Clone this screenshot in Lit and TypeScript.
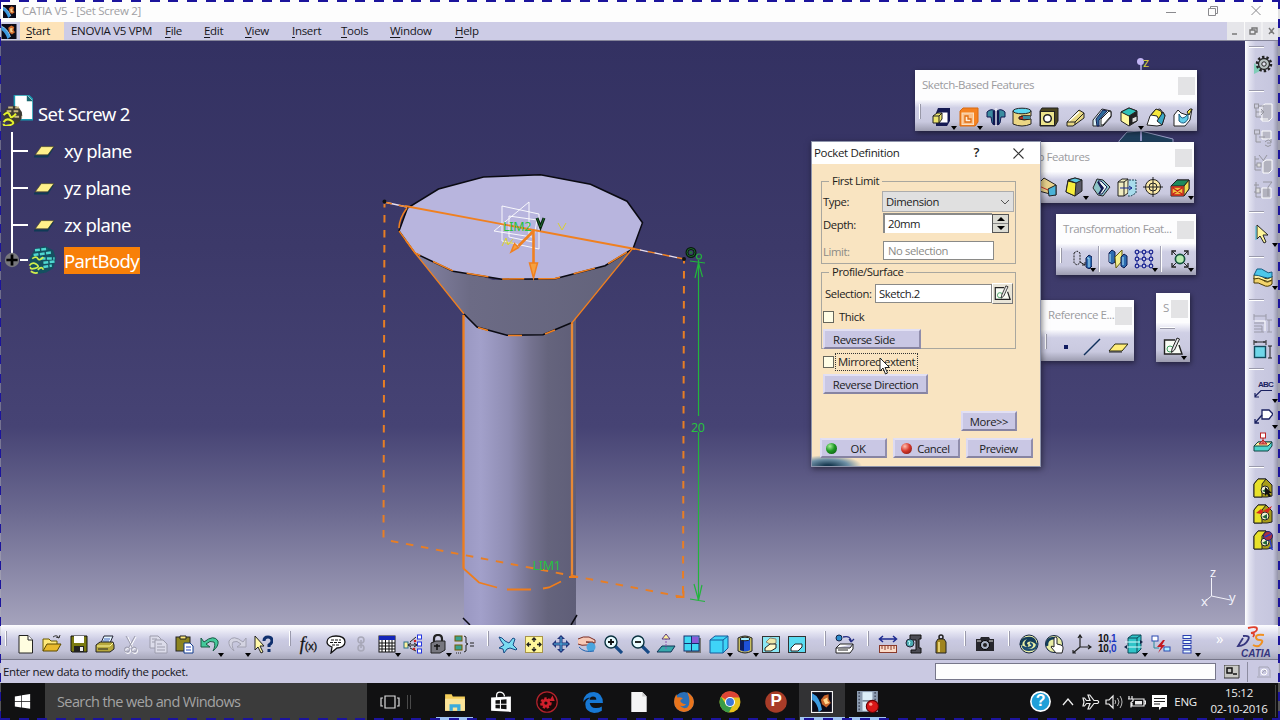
import { LitElement, css, html, svg, nothing, TemplateResult } from 'lit'
import { customElement, property } from 'lit/decorators.js'

// every icon is drawn on a 20 x 20 grid
const icons: Record<string, TemplateResult> = {
  logo: svg`<rect width="20" height="20" fill="#0a0a18"/><path d="M0 3 Q7 5 12 17 L8 20 Q5 11 0 8z" fill="#3d9be0"/><path d="M0 3 Q8 6 12 17" stroke="#bfe4ff" fill="none"/><path d="M9 5 L13 2 L17 4 L16 8 L18 11 L14 14 L10 11z" fill="#d0692a"/><path d="M11 6 l4 -1 -1 4 2 2 -4 0z" fill="#f5cf90"/>`,
  new: svg`<path d="M3 1.500h9l4.500 4.500v13h-13.500z" fill="#fffde0" stroke="#222"/><path d="M12 1.500v4.500h4.500" fill="#fff" stroke="#222"/>`,
  open: svg`<path d="M1 17V5h6l2 2h6v3" fill="#ffe97a" stroke="#6b5a00"/><path d="M1 17l4-7h14l-4 7z" fill="#e8b92c" stroke="#5a4800"/><path d="M11 3q4-3 6 1m0 0l1-3m-1 3l-3-1" fill="none" stroke="#333"/>`,
  save: svg`<path d="M2 2h16v16H3l-1-1z" fill="#7a7a10" stroke="#111"/><rect x="5" y="2" width="10" height="7" fill="#fff"/><rect x="5" y="12" width="10" height="6" fill="#222"/><rect x="11" y="13" width="3" height="4" fill="#eee"/>`,
  print: svg`<path d="M6 9l3-7h9l-3 7z" fill="#e5f6ff" stroke="#223"/><path d="M8 7h6M9 5h6" stroke="#46b"/><path d="M1 11l4-3h13l1 3v4l-4 3H1z" fill="#b7a83c" stroke="#222"/><path d="M2 12h13l3-3" stroke="#fff8a0" fill="none"/><path d="M3 15h10" stroke="#222"/>`,
  cut: svg`<g fill="none" stroke="#fff" transform="translate(1 1)"><path d="M6 2l5 11M14 2L8 13"/><circle cx="6" cy="16" r="2.500"/><circle cx="13" cy="16" r="2.500"/></g><g fill="none" stroke="#9c9cac"><path d="M5 2l6 11M14 2L8 13"/><circle cx="6" cy="15.500" r="2.500"/><circle cx="13" cy="15.500" r="2.500"/></g>`,
  copy: svg`<g fill="#dcdcea" stroke="#9c9cac"><path d="M2 2h8l3 3v9H2z"/><path d="M7 6h8l4 4v9H7z"/><path d="M9 10h5M9 13h8M9 16h8M4 5h5M4 8h3"/></g>`,
  paste: svg`<rect x="2" y="3" width="14" height="14" fill="#8c8420" stroke="#222"/><path d="M6 5V2h6v3z" fill="#ffe97a" stroke="#222"/><path d="M10 9h6l3 3v7h-9z" fill="#fff" stroke="#113a8c"/><path d="M12 13h5M12 16h5" stroke="#2344c0"/>`,
  undo: svg`<path d="M1 4v9h9l-4-3q4-4 8-2 2 3-1 9 6-5 5-10-4-7-14 1z" fill="#43c99a" stroke="#1a5a44"/>`,
  redo: svg`<path d="M19 4v9h-9l4-3q-4-4-8-2-2 3 1 9-6-5-5-10 4-7 14 1z" fill="#d4d4e2" stroke="#a2a2b2"/>`,
  whats: svg`<path d="M2 2v14l3-3 3 6 2-1-3-6h4z" fill="#fff9a8" stroke="#222"/><path d="M11 7q0-4 4-4t4 4q0 2-3 4v2" fill="none" stroke="#10306e" stroke-width="3"/><rect x="14.500" y="15" width="3" height="3" fill="#10306e"/>`,
  bubble: svg`<path d="M10 2c5 0 9 2 9 6s-4 6-8 6l-6 5 1-6c-3-1-5-3-5-5 0-4 4-6 9-6z" fill="#fff" stroke="#111" stroke-width="1.300"/><path d="M5 6h10M4 8.500h12M6 11h8" stroke="#111" stroke-dasharray="3 1"/>`,
  link: svg`<g fill="none" stroke="#a8a8b8" stroke-width="1.600"><circle cx="10" cy="6" r="3"/><circle cx="10" cy="14" r="3"/><path d="M10 6v8"/></g>`,
  table: svg`<rect x="2" y="2" width="16" height="16" fill="#fff" stroke="#111"/><rect x="2" y="2" width="16" height="4" fill="#1526b8"/><path d="M2 9h16M2 12h16M2 15h16M5 6v12M8.500 6v12M12 6v12M15 6v12" stroke="#111"/>`,
  relations: svg`<rect x="1" y="8" width="4" height="6" fill="#fff29a" stroke="#2a6f88"/><path d="M6 11h8M7 8l6-5M7 14l6 3M5 11l3-2m-3 2l3 2M14 11l-3-2m3 2l-3 2" stroke="#222" fill="none"/><g fill="#fff" stroke="#2233e0"><rect x="14.500" y="1" width="4" height="4"/><rect x="14.500" y="8" width="4" height="4"/><rect x="14.500" y="15" width="4" height="4"/></g><circle cx="11" cy="15" r="1.300" fill="#c22"/><circle cx="12" cy="7" r="1.300" fill="#c22"/>`,
  lock: svg`<path d="M6 10V5q0-4 4-4t4 4v5" fill="none" stroke="#222" stroke-width="2.200"/><path d="M3 9l5-2h9v9l-5 3H3z" fill="#77777f" stroke="#222"/><path d="M9 10v6M6 12h6" stroke="#111" stroke-width="1.500"/>`,
  rules: svg`<g fill="#38a090" stroke="#775c00"><rect x="1" y="2" width="7" height="5"/><rect x="1" y="11" width="7" height="5"/></g><path d="M2 19h6" stroke="#222" stroke-dasharray="1 1"/><path d="M10 2q3 0 2 4t2 4q-3 0-2 4t-2 4M16 9h4M16 12h4" fill="none" stroke="#222"/>`,
  fly: svg`<path d="M1 3l3 1 3 3 4 2 4-5 2 1-2 6 4 4-1 1-6-2-3 1-3 4-1-4-4-1 5-3-3-4z" fill="#7adcf2" stroke="#174a86"/>`,
  fit: svg`<rect x="1.500" y="2.500" width="17" height="16" fill="#fff79a" stroke="#a8954a"/><path d="M10 4v4M10 13v4M3 10.500h4M13 10.500h4M8 6l2-2 2 2M8 15l2 2 2-2M5 8.500l-2 2 2 2M15 8.500l2 2-2 2" stroke="#222" stroke-width="1.300" fill="none"/>`,
  pan: svg`<path d="M10 1l4 4h-2.500v3.500H15V6l4 4-4 4v-2.500h-3.500V15H14l-4 4-4-4h2.500v-3.500H5V14l-4-4 4-4v2.500h3.500V5H6z" fill="#23367c"/><path d="M10 3v14M3 10h14" stroke="#4fb5e0"/>`,
  rotate: svg`<path d="M1 5q5-3 11-2l6 3v3l-9-1h7l1 3H9q-4 1-8-1" fill="#f7c9b6" stroke="#7a2e26"/><circle cx="14" cy="13" r="4.500" fill="#4aa5de"/><path d="M2 13q5 6 15 4" fill="none" stroke="#1f63b0"/>`,
  zoomin: svg`<path d="M12 12l7 7" stroke="#174a86" stroke-width="3.200"/><circle cx="8" cy="8" r="6" fill="#e8fbff" stroke="#0b3340" stroke-width="1.400"/><path d="M8 5v6M5 8h6" stroke="#111" stroke-width="1.800"/>`,
  zoomout: svg`<path d="M12 12l7 7" stroke="#174a86" stroke-width="3.200"/><circle cx="8" cy="8" r="6" fill="#e8fbff" stroke="#0b3340" stroke-width="1.400"/><path d="M5 8h6" stroke="#111" stroke-width="1.800"/>`,
  normal: svg`<path d="M1 18l5-6h13l-4 6z" fill="#38a8ac" stroke="#135"/><path d="M10 15V4" stroke="#8a58b0" stroke-dasharray="2 1"/><path d="M10 0l4 5H6z" fill="#fff29a" stroke="#5a3a80"/>`,
  views: svg`<path d="M4 4h15v15H4z" fill="#777"/><rect x="2" y="2" width="15" height="15" fill="#40d8f4" stroke="#15306e"/><path d="M10 2.500h6.500V9H10z" fill="#8a5bd8"/><path d="M9.500 2v15M2 9.500h15" stroke="#15306e"/>`,
  cube: svg`<path d="M1 6l5-4h13v12l-5 5H1z" fill="#3fd4f7" stroke="#155a9c"/><path d="M1 6h13v13M14 6l5-4" fill="none" stroke="#155a9c"/>`,
  cylinder: svg`<path d="M3 4q7-4 14 0v13q-7 4-14 0z" fill="#c8be62" stroke="#222"/><path d="M5 6h10v10q-5 3-10 0z" fill="#1d50d8"/><path d="M5 6h4v11l-4-1z" fill="#0c1e60"/><ellipse cx="10" cy="5" rx="5" ry="1.800" fill="#a6f0ff" stroke="#222"/>`,
  hide: svg`<rect x="1.500" y="2.500" width="17" height="16" fill="#8ae7f4" stroke="#333"/><path d="M5 8l4-4 6 1v4l-4 2z" fill="#ece6a8" stroke="#887"/><path d="M4 14l5-4h6v4l-5 3H4z" fill="#fff8c8" stroke="#222"/>`,
  swap: svg`<rect x="1.500" y="2.500" width="17" height="16" fill="#5adcf2" stroke="#333"/><path d="M4 14l4-4h7v3l-4 4H4z" fill="#fff" stroke="#222"/>`,
  printer3d: svg`<circle cx="4" cy="4" r="3" fill="#2c8ccc" stroke="#124"/><path d="M8 3q8-2 8 5m0 0l-2-3m2 3l3-3" fill="none" stroke="#222a80" stroke-width="1.300"/><path d="M1 14l4-4h13l-3 4zM1 14v5h14l3-4v-5M3 16h10" fill="#fff" stroke="#222"/>`,
  measure: svg`<path d="M2 5h16M5 2L1.500 5 5 8M15 2l3.500 3L15 8" fill="none" stroke="#1d2a90" stroke-width="1.500"/><rect x="1.500" y="11.500" width="17" height="7" fill="#fbdcc8" stroke="#8a3a2a"/><path d="M4 12v3M7 12v4M10 12v3M13 12v4M16 12v3" stroke="#8a3a2a"/>`,
  clamp: svg`<path d="M6 1h11v4h-2v9h2v5H7v-3h5V6H6z" fill="#4c4c54" stroke="#111"/><circle cx="6" cy="9" r="4" fill="#49a8b0" stroke="#223"/><path d="M4 7l2 1-1 3" stroke="#cff" fill="none"/>`,
  weight: svg`<circle cx="10" cy="3" r="2" fill="none" stroke="#222" stroke-width="1.500"/><path d="M7 5h6l2 3v11H5V8z" fill="#a08420" stroke="#222"/><path d="M8 8v10" stroke="#e5d070" stroke-width="2"/>`,
  camera: svg`<path d="M1 5h4l1-2h8l1 2h4v12H1z" fill="#26262c"/><circle cx="10" cy="11" r="4.500" fill="#a9b3c4" stroke="#000"/><circle cx="10" cy="11" r="2" fill="#222"/><path d="M2 7h4M14 7h4" stroke="#ddd"/>`,
  update: svg`<circle cx="10" cy="10" r="9" fill="#e9eea6" stroke="#10203c"/><path d="M2 11q0-7 8-7 5 0 6 4-4-3-8-1-3 3 1 5" fill="none" stroke="#123c58" stroke-width="2.600"/><path d="M18 9q0 7-8 7-5 0-6-3 4 2 8 0 3-2-1-4" fill="none" stroke="#1c4c70" stroke-width="2"/>`,
  manual: svg`<circle cx="9" cy="10" r="8.500" fill="#e9eea6" stroke="#10203c"/><path d="M2 12q-1-8 8-8" fill="none" stroke="#123c58" stroke-width="2.600"/><path d="M9 4q2-2 3 0v6l4 1q3 1 2 4l-1 4h-6l-5-6q0-2 3 0z" fill="#fff" stroke="#222"/>`,
  axis: svg`<path d="M8 13V1M8 13h11M8 13l-7 6M6 4l2-3 2 3M16 11l3 2-3 2M1 16v3h3" stroke="#222" fill="none" stroke-width="1.200"/>`,
  swap3: svg`<path d="M4 4l4-3h9v14l-4 4H4z" fill="#2fc4c8" stroke="#0c4a58"/><path d="M4 4h9v15M13 4l4-3" fill="none" stroke="#0c4a58"/><path d="M1 8h17M1 13h17" stroke="#d9fbff"/><path d="M0 13l3-2v4zM19 8l-3-2v4z" fill="#124"/>`,
  flash: svg`<rect x="1" y="2" width="6" height="5" fill="#fff" stroke="#2a48b0"/><rect x="13" y="13" width="6" height="4" fill="#aef" stroke="#2a48b0"/><path d="M3 7v7h5" fill="none" stroke="#2a8a9a"/><path d="M12 6l-6 7h4l-3 6 7-8h-3l3-5z" fill="#c41820"/>`,
  list: svg`<g fill="#e9fbff" stroke="#2a3fb0"><rect x="6" y="1.500" width="8" height="3"/><rect x="6" y="6.500" width="8" height="3"/><rect x="6" y="11.500" width="8" height="3"/><rect x="6" y="16" width="8" height="3"/></g>`,

  gear: svg`<path d="M1 8v11l8-4z" fill="#7fcdb8"/><circle cx="11" cy="9" r="7" fill="none" stroke="#222" stroke-width="2.500" stroke-dasharray="2.400 2"/><circle cx="11" cy="9" r="5.500" fill="#b8c2c2" stroke="#222" stroke-width="1.300"/><circle cx="11" cy="9" r="2.200" fill="#e4e4f0" stroke="#222"/>`,
  gray1: svg`<path d="M9 4l3-2h7v14l-3 3H9z" fill="#b9b9c6" stroke="#fff"/><g fill="#cdcddc" stroke="#96969f"><rect x="1.500" y="2" width="4" height="4"/><path d="M3 6v9h5M6 4h5M3 10h8l-3-3m3 3l-3 3"/></g><path d="M7 5v8M7 17h8" stroke="#fff"/>`,
  gray2: svg`<path d="M9 3h9v8H9z" fill="#b9b9c6" stroke="#fff"/><g fill="#cdcddc" stroke="#96969f"><rect x="1.500" y="2" width="5" height="4"/><path d="M3 6v8h5M6 9h6"/><path d="M12 14q4-4 6 0m0-3v4h-4M18 17q-3 3-6 0" fill="none"/></g>`,
  gray3: svg`<path d="M10 8l3-2h6v10l-3 3h-6z" fill="#b2b2be" stroke="#fff"/><g fill="none" stroke="#96969f"><path d="M2 2v14h6M2 5h4M6 1l4 5M14 1l-4 6M2 11h6"/><rect x="4" y="9" width="4" height="4" fill="#ddd"/></g>`,
  gray4: svg`<path d="M9 8h9v10H9z" fill="#b2b2be" stroke="#fff"/><g fill="none" stroke="#96969f"><path d="M3 2v15h5M1 5h5M10 2h9l-4 5v9M1 12h7"/><rect x="3" y="8" width="4" height="5" fill="#ddd"/></g>`,
  select: svg`<path d="M4 1v14l3-3 4 7 2-1-3-7h5z" fill="#fff79a" stroke="#222"/><path d="M3 2v14" stroke="#3ab8c8"/>`,
  surface: svg`<path d="M1 11q5-2 9 2t9 0v4q-4 4-9 1t-9-2z" fill="#f3d46c" stroke="#4a3a00"/><path d="M1 8q5-2 9 2t9-1v4q-4 3-9 0t-9-1z" fill="#fff2a8" stroke="#4a3a00"/><path d="M4 2q5-1 8 2t7 1v5q-4 2-9 0t-9-2z" fill="#4cc7ea" stroke="#175a80"/>`,
  dimsgray: svg`<g fill="none" stroke="#9a9aa8"><path d="M1 3h12M1 1v6M13 1v6M16 7v12M14 7h5M14 19h5M1 10h10M1 13h8M9 13v6M1 16h8M1 19h10"/></g><path d="M2 8h10v10" stroke="#fff" fill="none"/>`,
  dims: svg`<rect x="1.500" y="7.500" width="11" height="11" fill="#6fd6e8" stroke="#124a5c" stroke-width="1.400"/><path d="M1 3h12M1 1v5M13 1v5M17 7v12M15 7h4M15 19h4M3 2v2M11 2v2" fill="none" stroke="#222"/>`,
  leader: svg`<path d="M19 10.500H8l-6 6M2 13v4h4" fill="none" stroke="#1a2160" stroke-width="1.200"/>`,
  tag: svg`<path d="M9 4h7l4 4-4 5H9z" fill="#fff" stroke="#1a2160" stroke-width="1.300"/><path d="M9 9l-7 8M2 13v4h4" fill="none" stroke="#1a2160" stroke-width="1.300"/>`,
  stamp: svg`<path d="M1 14l4-4h14v4l-4 5H1z" fill="#4cd4cc" stroke="#144"/><path d="M1 14l4-4h14l-4 4z" fill="#fff2a0" stroke="#144"/><rect x="7.500" y="1" width="5" height="5" fill="#fff" stroke="#b22"/><path d="M10 6v6M6 12h8l-4-4z" stroke="#b22" fill="#d88"/>`,
  nut: svg`<path d="M1 6l4-5h8l6 6v11l-5 1H1z" fill="#a89c18" stroke="#222"/><path d="M1 6l4-5h8l-4 5v13H1z" fill="#e8e12a" stroke="#222"/><circle cx="12" cy="12" r="4" fill="#f2f0d0" stroke="#222"/><path d="M9 13l5-3v5z" fill="#20663a"/>`,

  pad: svg`<path d="M6 1h12v13l-3 5H4V6z" fill="#151a52"/><path d="M6 5h10v11H6z" fill="#fff" stroke="#151a52"/><path d="M1 9l4-3h5v6l-3 4H1z" fill="#ece46c" stroke="#222"/><path d="M1 9h6v7M7 9l3-3" fill="none" stroke="#222"/>`,
  pocket: svg`<path d="M1 4l3-3h15v14l-3 4H1z" fill="#f58220" stroke="#d86a10"/><rect x="3" y="6" width="11.500" height="11.500" fill="#f8c08c" stroke="#fbe0c0"/><path d="M6 9h3v3h3v3H6z" fill="#fff0dc" stroke="#e06c10" stroke-width="1.300"/>`,
  shaft: svg`<path d="M1 5q4-4 8-1v14l-3-2-1-6H1z" fill="#3a8ca0" stroke="#101850"/><path d="M19 5q-4-4-8-1v14l3-2 1-6h4z" fill="#3a8ca0" stroke="#101850"/><path d="M8 4v14M12 4v14" stroke="#101850" stroke-width="2.500"/><path d="M10 1v18" stroke="#fff"/>`,
  groove: svg`<path d="M1 4v13q9 4 18 0v-5H9V9h10V4z" fill="#ecd684" stroke="#222"/><ellipse cx="10" cy="4" rx="9" ry="2.800" fill="#5cd8f0" stroke="#222"/><path d="M7 10q5-2 11-1v3q-6 2-11 0z" fill="#b02a20" stroke="#222"/><path d="M11 9h7v3h-7z" fill="#3a8ca0"/>`,
  hole: svg`<path d="M1 4l2-3h16v13l-3 5H1z" fill="#4a4420" stroke="#222"/><rect x="1.500" y="4.500" width="14" height="14" fill="#ece48c" stroke="#222"/><circle cx="8.500" cy="11.500" r="3.800" fill="#fff" stroke="#222" stroke-width="1.500"/>`,
  rib: svg`<path d="M1 15L13 3l5 3v5L7 19H1z" fill="#e8d884" stroke="#222"/><path d="M1 15h8l9-9M9 15v3" stroke="#222" fill="none"/><path d="M3 14l10-9" stroke="#fff" stroke-width="1.500"/>`,
  slot: svg`<path d="M1 13L10 2l9 2v6l-8 9H1z" fill="#d8f0f4" stroke="#222"/><path d="M4 12l7-9 4 1-8 9v6H5z" fill="#2e6c9c" stroke="#151a52"/><path d="M9 12l8-8 2 1v4l-8 9H9z" fill="#fff" stroke="#222"/>`,
  solid: svg`<path d="M2 5l8-4 8 3v10l-8 5-8-5z" fill="#fff9a0" stroke="#222"/><path d="M2 5l8-4 8 3-8 5z" fill="#2fc0b8" stroke="#222"/><path d="M10 9l8-5v10l-8 5z" fill="#222"/><path d="M13 11l5-2v5l-5 2z" fill="#ddd" stroke="#222"/>`,
  multi: svg`<path d="M1 18l3-9 5-6 5-1 5 6-3 10-5 1z" fill="#fff" stroke="#222"/><path d="M5 8l5-6 5 2 2 6-4 3-2-4z" fill="#f7e83c" stroke="#222"/><path d="M11 14l6-9 2 4-3 9z" fill="#3aa6c4" stroke="#222"/>`,
  removed: svg`<path d="M1 8l4-5 3 3 6 2 5-6-2 11-5 6H1z" fill="#fff" stroke="#222"/><path d="M6 7q3 8 9 0v5q-4 7-9 2z" fill="#62cce8" stroke="#175a80"/><path d="M14 5l3-3h2l-3 6z" fill="#f7e83c" stroke="#222"/>`,
  fillet: svg`<path d="M1 6l5-5 12 7v10l-6-1L1 14z" fill="#e9d28c" stroke="#222"/><path d="M10 12l8-4v10l-7 1z" fill="#4ab2d8" stroke="#222"/><path d="M1 9l9 4" stroke="#c33"/>`,
  draft: svg`<path d="M4 3l7-2 7 2v11l-7 5-9-4z" fill="#5a5a68" stroke="#222"/><path d="M4 4l8 2-1 13-9-4z" fill="#f7ee3c" stroke="#222"/><path d="M4 3l7-2 7 2-6 3z" fill="#5cc8e0" stroke="#222"/>`,
  shell: svg`<path d="M2 11L6 2l6 1 7 7-7 9-5-1z" fill="#8cc4c8" stroke="#222"/><path d="M7 4h3l6 6-5 7H8l4-6z" fill="#e8f4f0" stroke="#151a52"/><path d="M6 5h2l5 6-4 6H7l3-5z" fill="#151a52"/>`,
  thickness: svg`<path d="M1 5l4-3h6v14l-4 3H1z" fill="#f0ecc0" stroke="#222"/><path d="M1 5h6v14M7 5l4-3" fill="none" stroke="#222"/><path d="M12 3h7v13l-5 3h-3" fill="#a8dcec" stroke="#245" stroke-dasharray="2 1"/><path d="M3 11h12m0 0l-3-2m3 2l-3 2" stroke="#1a2a90" fill="none"/>`,
  thread: svg`<circle cx="10" cy="10" r="7.500" fill="#fbe9a8" stroke="#222"/><circle cx="10" cy="10" r="4" fill="none" stroke="#222"/><path d="M10 0v20M0 10h20" stroke="#222"/>`,
  remove: svg`<path d="M1 9l6-6h12v9l-5 7H1z" fill="#f0c040" stroke="#222"/><path d="M1 9l6-6h12l-5 6z" fill="#1e8a5c" stroke="#222"/><path d="M14 9l5-6v9l-5 7z" fill="#f2dc50" stroke="#222"/><path d="M3 11l9 6M12 11l-9 6M2 10h11v8H2z" stroke="#c8201c" stroke-width="1.300" fill="none"/>`,
  translate: svg`<path d="M2 4l3-2 3 2v10l-3 2-3-2z" fill="none" stroke="#222" stroke-dasharray="2 1"/><path d="M8 13l5 3m0 0v-3m0 3h-3" stroke="#222" fill="none"/><path d="M14 9l3-3 3 2v9l-3 3-3-2z" fill="#2d6cb0" stroke="#0d1a50"/><path d="M15 9h2v9" stroke="#b8ecff" fill="none"/>`,
  mirror: svg`<path d="M1 4l3-3 3 2v10l-3 2-3-2z" fill="#2d6cb0" stroke="#0d1a50"/><path d="M2 5v8" stroke="#b8ecff"/><path d="M7 8l7-7v11l-6 7z" fill="#f4f08c" stroke="#665c10"/><path d="M13 8l3-3 3 2v9l-3 3-3-2z" fill="#2d6cb0" stroke="#0d1a50"/><path d="M15 8v8" stroke="#b8ecff"/>`,
  pattern: svg`<path d="M3 3h14M3 10h14M3 17h14M3 3v14M10 3v14M17 3v14" stroke="#2430a0"/><g fill="#c8c8e4" stroke="#1c2690" stroke-width="1.200"><circle cx="3" cy="3" r="1.800"/><circle cx="10" cy="3" r="1.800"/><circle cx="17" cy="3" r="1.800"/><circle cx="3" cy="10" r="1.800"/><circle cx="10" cy="10" r="1.800"/><circle cx="17" cy="10" r="1.800"/><circle cx="3" cy="17" r="1.800"/><circle cx="10" cy="17" r="1.800"/><circle cx="17" cy="17" r="1.800"/></g>`,
  scale: svg`<path d="M2 2l16 16M18 2L2 18" stroke="#222"/><path d="M2 6V2h4M14 2h4v4M18 14v4h-4M6 18H2v-4" fill="none" stroke="#222" stroke-width="1.300"/><circle cx="10" cy="10" r="4.600" fill="#b8ecb0" stroke="#14523c" stroke-width="1.700"/>`,
  point: svg`<rect x="8" y="8" width="4" height="4" fill="#101c60"/>`,
  line: svg`<path d="M2 18L18 2" stroke="#10305c" stroke-width="1.400"/>`,
  plane: svg`<path d="M1 14l6-7h13l-6 7z" fill="#ffed78" stroke="#2a2a10"/><path d="M1 15h13" stroke="#222"/>`,
  sketch: svg`<path d="M1 3h15l3 14H1z" fill="#f8fbf4"/><path d="M12 3H1.500v14H19l-3-9" fill="none" stroke="#222" stroke-width="1.400"/><circle cx="7" cy="12" r="3" fill="none" stroke="#3c9c60"/><path d="M9 12l5-11 2.500 1-5 11-3 2.500z" fill="#e8e8e8" stroke="#222"/>`,

  treeplane: svg`<path d="M1 15h12l5-8" fill="none" stroke="#0f3a56" stroke-width="2"/><path d="M2 13.500L7.500 6H19l-5.500 7.500z" fill="#fff08a" stroke="#3a3a20" stroke-width=".6"/>`,
  body: svg`<path d="M5 2l7-2 6 3 2 6-2 7-5 3-6 1-5-4-1-7z" fill="#145060"/><path d="M5 3l9-1M4 6.500l13-2M9 9h10M11 12l8-1M11 15l6-1" stroke="#4fd8d0" stroke-width="1.800" stroke-dasharray="3.500 1"/><path d="M3 9q3-2 4 0t4-1M1 14q2-3 5-1t-1 3-3-1M7 17q3-3 4 0M2 18q3 2 5 1" fill="none" stroke="#d0f04c" stroke-width="1.200"/>`,
  root: svg`<path d="M8 0h9l3 3v13H8z" fill="#fff" stroke="#1899b0"/><path d="M16 0l4 4h-4z" fill="#18646e"/><circle cx="7" cy="13" r="6" fill="#3c3a34"/><path d="M4 8h7M3 10.500h9M8 14h5" stroke="#c8b884" stroke-dasharray="3 1.500" stroke-width="1.300"/><path d="M1 13q3-3 4 0t4-1M1 17.500q2-3 5-1t-1 3-4-1" fill="none" stroke="#e4f22c" stroke-width="1.300"/>`,
  plus: svg`<circle cx="10" cy="10" r="9" fill="#77777c"/><path d="M10 3v14M3 10h14" stroke="#000" stroke-width="3.400"/>`,

  windows: svg`<path d="M1 4l7.500-1.200v6.700H1zM9.300 2.700L19 1.300v8.200H9.300zM1 10.300h7.500V17L1 15.900zM9.300 10.300H19v8.200l-9.700-1.400z" fill="#fff"/>`,
  taskview: svg`<path d="M5 4h10v12H5zM3 6H1v8h2M17 6h2v8h-2" fill="none" stroke="#ddd" stroke-width="1.200"/>`,
  explorer: svg`<path d="M1 3h6l1 2h11v13H1z" fill="#f5cf5a"/><path d="M1 7h18v11H1z" fill="#fbe59a"/><path d="M5 18v-6h10v6h-3v-3H8v3z" fill="#3cabdc"/>`,
  store: svg`<path d="M6 7V4q0-3 3-3t4 3v1" fill="none" stroke="#fff" stroke-width="1.200"/><path d="M1 6l18-1v14l-18-1z" fill="#fff"/><path d="M5 8.500l4-.4v3.600H5zM10 8l5-.5v4.200h-5zM5 12.500h4V16l-4-.4zM10 12.500h5v4l-5-.4z" fill="#111"/>`,
  redgear: svg`<circle cx="10" cy="10" r="9.300" fill="#1a0808" stroke="#b3232c" stroke-width="1.100"/><circle cx="9" cy="11" r="4" fill="#d0202c" stroke="#d0202c" stroke-width="2.500" stroke-dasharray="2 1.400"/><circle cx="9" cy="11" r="1.500" fill="#1a0808"/><path d="M12 9l3-5 2 5z" fill="#d0202c"/>`,
  edge: svg`<path d="M1 10Q2 1 11 1q8 1 8 10H7q1 5 6 4.500 3 0 5-1.500v4q-3 2-7 2-8-1-8-8 0-4 5-6-4 0-7 4zM7 8h6q0-3-3-3T7 8z" fill="#1778d4" fill-rule="evenodd"/>`,
  file: svg`<path d="M3 1h10l4 4v14H3z" fill="#f5f5f5"/><path d="M13 1v4h4" fill="#ccc"/>`,
  firefox: svg`<circle cx="10" cy="10" r="9" fill="#2a6fb8"/><path d="M13 1q6 4 6 9a9 9 0 0 1-18 0q0-4 2-7l1 3q3-1 5 1-3 1-2 3 2 2 5 2-3 3-6 1 3 4 7 2 4-4 0-14z" fill="#e8741c"/>`,
  chrome: svg`<circle cx="10" cy="10" r="9.500" fill="#e8c21c"/><path d="M10 10L1.800 5.200A9.500 9.500 0 0 1 18.800 6H10z" fill="#dd4535"/><path d="M1.800 5.200A9.500 9.500 0 0 0 9 19.500l4-7.500-6 1z" fill="#3a9c48"/><circle cx="10" cy="10" r="4.600" fill="#fff"/><circle cx="10" cy="10" r="3.600" fill="#3c78d8"/>`,
  disc: svg`<circle cx="10" cy="10" r="9.800" fill="#a83c28"/>`,
  catia: svg`<rect x=".5" y=".5" width="19" height="19" fill="#0a0a18" stroke="#f2f2f2"/><path d="M1 2q7 3 9 15l-3 2Q6 11 1 8z" fill="#3d9be0"/><path d="M9 8l3-4 4-1v4l2 4-4 4-4-3z" fill="#c8642a"/><path d="M11 8l4-2v3l2 2-4 1z" fill="#ffd890"/>`,
  recorder: svg`<rect x="0" y="0" width="19" height="19" fill="#8c9cb0"/><path d="M5 1h9v17H5z" fill="#dceef8"/><path d="M2 1v17M16.500 1v17" stroke="#4b5468" stroke-dasharray="1.500 1.500" stroke-width="1.500"/><path d="M5 9h9" stroke="#456"/><circle cx="14" cy="14" r="5.500" fill="#d81818" stroke="#600"/><circle cx="12.500" cy="12" r="1.500" fill="#ff9a8a"/>`,
  help: svg`<circle cx="10" cy="10" r="9.200" fill="#1f9fd8" stroke="#fff" stroke-width="1.500"/>`,
  chevron: svg`<path d="M5 13l5-6 5 6" fill="none" stroke="#eee" stroke-width="1.300"/>`,
  airplane: svg`<path d="M3 10L2 6h1.500l2 2.500H9L7 3h1.800L13 8.500h3.500q2.500 1.500 0 3H13L8.800 17H7l2-5.500H5.500l-2 2.500H2z" fill="none" stroke="#eee" stroke-width="1.200"/>`,
  speaker: svg`<path d="M3 8h3l4-4v12l-4-4H3z" fill="none" stroke="#eee" stroke-width="1.200"/><path d="M12 8q1.500 2 0 4M14.500 6q3 4 0 8M17 4q4 6 0 12" fill="none" stroke="#bbb"/>`,
  battery: svg`<path d="M7 7h11v7H6v-3M18 9h1.500v3H18M3 4v3M6 4v3M2 7h5v2l-2 1.500v5" fill="none" stroke="#eee" stroke-width="1.200"/><rect x="9" y="9" width="7" height="3.500" fill="#eee"/>`,
  note: svg`<path d="M3 3h15v12h-5l-3 3v-3H3z" fill="#fff"/><path d="M5 6.500h11M5 9.500h11M5 12h6" stroke="#222"/>`,
}

const fileTools = [['new'], ['open'], ['save'], ['print'], ['cut'], ['copy'], ['paste'], ['undo', 'v'], ['redo', 'v'], ['whats']]
const knowledgeTools = [['fx'], ['bubble'], ['link'], ['table', 'v'], ['relations'], ['lock', 'v'], ['rules']]
const viewTools = [['fly'], ['fit'], ['pan'], ['rotate'], ['zoomin'], ['zoomout'], ['normal'], ['views'], ['cube', 'v'], ['cylinder', 'v'], ['hide'], ['swap']]
const endTools = [['update'], ['manual'], ['axis'], ['digits'], ['swap3', 'v'], ['flash'], ['list', 'v']]

const bottomGroups = [fileTools, knowledgeTools, viewTools, [['printer3d']], [['measure'], ['clamp'], ['weight']], [['camera']], endTools]

const sideGroups = [
  { lead: 4, tools: [['gear']] },
  { lead: 7, tools: [['gray1'], ['gray2'], ['gray3'], ['gray4']] },
  { lead: 8, tools: [['select', 'v']] },
  { lead: 6, tools: [['surface', 'v']] },
  { lead: 9, tools: [['dimsgray'], ['dims']] },
  { lead: 7, tools: [['abc', 'v'], ['tag', 'v'], ['stamp']] },
  { lead: 7, tools: [['nut'], ['nutred'], ['nutblue']] },
]

@customElement('ui-icon')
export class UiIcon extends LitElement {
  @property() name = ''

  render() {
    // a few tools carry letters, those stay text
    if (this.name === 'fx') return html`<span class="fx">f<small>(x)</small></span>`
    if (this.name === 'digits') return html`<span class="digits">10<b>,1</b><br>10<b>,0</b></span>`
    if (this.name === 'abc') return html`<span class="abc">ABC</span><svg viewBox="0 0 20 20">${icons.leader}</svg>`
    if (this.name === 'ps') return html`<svg viewBox="0 0 20 20">${icons.disc}</svg><span class="over p">P</span>`
    if (this.name === 'help') return html`<svg viewBox="0 0 20 20">${icons.help}</svg><span class="over q">?</span>`
    if (this.name === 'nutred') return html`<svg viewBox="0 0 20 20">${icons.nut}<path d="M3 9l5-4 2 2 9-5-4 7-4-2-3 3z" fill="#d8281c"/></svg>`
    if (this.name === 'nutblue') return html`<svg viewBox="0 0 20 20">${icons.nut}<circle cx="15" cy="6" r="4.500" fill="#a83040" stroke="#1a2270"/><path d="M12 7l6-3M17 10l2 9-3-2" stroke="#2a3cc0" stroke-width="1.500" fill="none"/></svg>`
    if (this.name === 'nut') return html`<svg viewBox="0 0 20 20">${icons.nut}<path d="M12 9v9l2-2 2 3 2-1-2-3h3z" fill="#111"/></svg>`
    return html`<svg viewBox="0 0 20 20">${icons[this.name] ?? nothing}</svg>`
  }

  static styles = css`
    :host {
      display: block;
      position: relative;
      width: 20px;
      height: 20px;
    }
    svg {
      display: block;
      width: 100%;
      height: 100%;
    }
    .fx {
      font: italic 18px/20px "Liberation Serif", serif;
      color: #111;
      letter-spacing: 0;
      -webkit-text-stroke: 0.3px #111;
    }
    small {
      font: 11px "Liberation Sans", sans-serif;
      letter-spacing: -0.3px;
    }
    .digits {
      display: block;
      font: bold 10px/10px "Liberation Sans", sans-serif;
      letter-spacing: -0.3px;
      color: #111;
      white-space: nowrap;
    }
    .digits b {
      color: #1a35c0;
    }
    .abc {
      position: absolute;
      left: 5px;
      top: 0;
      font: bold 8px/9px "Liberation Sans", sans-serif;
      letter-spacing: -0.8px;
      color: #1a2160;
    }
    .over {
      position: absolute;
      inset: 0;
      text-align: center;
      color: #fff;
      font: bold 16px/20px "Liberation Sans", sans-serif;
      letter-spacing: 0;
    }
    .p {
      font-size: 17px;
    }
  `
}

const tool = ([name, caret]: string[]) => html`
  <div class="tool"><ui-icon name=${name}></ui-icon>${caret ? html`<i class="caret"></i>` : nothing}</div>`

const toolStyles = css`
  .tool {
    position: relative;
    flex: none;
    display: flex;
    align-items: center;
    justify-content: center;
    width: var(--tool-width, 26px);
    height: var(--tool-height, 26px);
  }
  .caret {
    position: absolute;
    right: -1px;
    bottom: 0;
    border: 3.500px solid transparent;
    border-top: 4px solid #000;
    border-bottom: 0;
  }
`

@customElement('float-bar')
export class FloatBar extends LitElement {
  @property() label = ''
  @property({ attribute: false }) groups: string[][][] = []

  render() {
    return html`
      <div class="head"><span>${this.label}</span><i class="close"></i></div>
      <div class="body">
        <i class="grip"></i>
        ${this.groups.map(g => html`<div class="group">${g.map(tool)}</div>`)}
      </div>
    `
  }

  static styles = [toolStyles, css`
    :host {
      display: flex;
      flex-direction: column;
      height: 61px;
      background: #fdfdfe;
      box-shadow: 1px 2px 5px rgba(0, 0, 0, 0.45);
      font: 11.500px "Open Sans", "Noto Sans", sans-serif;
      color: #9b9b9e;
    }
    .head {
      display: flex;
      justify-content: space-between;
      height: 30px;
      padding: 0 2px 0 7px;
      line-height: 29px;
      white-space: nowrap;
      box-sizing: border-box;
      letter-spacing: -0.45px;
    }
    .close {
      width: 17px;
      height: 18px;
      margin-top: 7px;
      background: #e3e3e5;
    }
    .body {
      flex: 1;
      display: flex;
      align-items: center;
      padding-left: 4px;
      background: linear-gradient(#fafafd, #cfcfe5 25%, #c9c9df 70%, #9d9db0);
    }
    .grip {
      width: 1px;
      height: 15px;
      margin: 0 var(--grip-gap, 7px) 8px 0;
      border-left: 1px solid #fff;
      background: #9898a8;
    }
    .group {
      display: flex;
      margin-top: var(--drop, 2px);
    }
    .group + .group {
      margin-left: 4px;
      padding-left: 5px;
      border-left: 1px solid #fff;
      box-shadow: -1px 0 #a2a2b4;
    }
    :host(.narrow) {
      height: 69px;
    }
    :host(.narrow) .body {
      flex-direction: column;
      align-items: flex-start;
    }
    :host(.narrow) .grip {
      width: 15px;
      height: 1px;
      margin: 4px 0 5px 0;
      border-left: 0;
      border-top: 1px solid #fff;
    }
    :host(.narrow) .group {
      margin: 0;
    }
  `]
}

@customElement('model-view')
export class ModelView extends LitElement {
  render() {
    return html`
      <svg viewBox="0 41 1245 584" width="1245" height="584">
        <defs>
          <linearGradient id="shank">
            <stop offset="0" stop-color="#9a98c2"/><stop offset=".15" stop-color="#a2a0ca"/>
            <stop offset=".4" stop-color="#8e8cb2"/><stop offset=".6" stop-color="#74728f"/>
            <stop offset=".75" stop-color="#65647d"/><stop offset="1" stop-color="#5f5e78"/>
          </linearGradient>
          <linearGradient id="cone">
            <stop offset="0" stop-color="#8583a4"/><stop offset=".25" stop-color="#6c6b85"/><stop offset="1" stop-color="#62627a"/>
          </linearGradient>
        </defs>

        <!-- compass -->
        <path d="M1119 141l8-9 14-1 32 8v4h-54z" fill="#1f3f5c" stroke="#9aa0c8"/>
        <path d="M1141 63v78" stroke="#b9b3ec" stroke-width="1.500"/>
        <circle cx="1140.500" cy="61.500" r="3.500" fill="#c3b5f5"/>
        <text x="1143" y="67" class="yellow">z</text>

        <path d="M464 312h112v313H464z" fill="url(#shank)"/>
        <path d="M415 253l49 61 13 13 30 8.300 36-.6 28-11.700 62-75-80 31-60 1z" fill="url(#cone)"/>
        <path d="M399 231l8.500-23 31-19 45-12 57-2.300 50 9.500 36.500 17 15.500 21.500-9.500 26-28 17-50 13-53 .500-49-8-38-18z" fill="#b8b5de" stroke="#0a0a12" stroke-width="1.500"/>
        <path d="M407 208q-9 12-8 23l16 22 38 18 49 8 53-.500 50-13 28-17" fill="none" stroke="#f08020" stroke-width="1.500" stroke-dasharray="22 14"/>
        <path d="M399 231l16 22M633 248l-62 76M415 253l49 61" fill="none" stroke="#f08020" stroke-width="1.300"/>
        <path d="M464 314l13 13 30 8.300 36-.6 28-11.700" fill="none" stroke="#0a0a12" stroke-width="1.500"/>
        <path d="M478 327.500l10 3M508 335.500h14M545 334l10-4" fill="none" stroke="#f08020" stroke-width="1.500"/>
        <path d="M463 618l7 7M577 615l-6 10" stroke="#0a0a12" stroke-width="1.500"/>
        <path d="M463.500 315v253M572 323v253" stroke="#ee7d1c" stroke-width="2.300"/>
        <path d="M572 324v250" stroke="#d9a06a" stroke-width=".7"/>
        <path d="M463 568l16 14.500 18 5M507 589.500h24M543 588.500l6-1 12-6M569 577l9 0" fill="none" stroke="#ee7d1c" stroke-width="1.800"/>

        <g fill="none" stroke="#fff" stroke-width=".9">
          <path d="M502 206l37 8v35l-37-8zM494 231l35-29v33M494 231l38 6M509 216l28 4-4 22-24-5z"/>
        </g>
        <path d="M384 202l23 5" stroke="#e9dff0" stroke-width="1.300"/>
        <path d="M384 202l23 5M633 248.500l51 10.500" stroke="#f08020" stroke-width="1.500" stroke-dasharray="8 7"/>
        <path d="M633 248.500l51 10.500" stroke="#e9dff0" stroke-width="1.300" stroke-dasharray="8 7" stroke-dashoffset="8"/>
        <path d="M405 206l230 43" stroke="#f08020" stroke-width="1.900"/>
        <path d="M384.500 204L383.500 540" stroke="#e87e24" stroke-width="2" stroke-dasharray="7.500 7.500" stroke-dashoffset="4"/>
        <path d="M684 260L683 598" stroke="#e87e24" stroke-width="2" stroke-dasharray="7.500 7.500" stroke-dashoffset="4"/>
        <path d="M391 541l292 56" stroke="#e87e24" stroke-width="1.900" stroke-dasharray="7.500 7.750"/>
        <path d="M676 597h7.500v-6" fill="none" stroke="#e87e24" stroke-width="1.900"/>
        <circle cx="384.500" cy="201.500" r="2" fill="#111"/>
        <circle cx="684" cy="259" r="2" fill="#111"/>

        <path d="M533.500 230v34M533.500 231l-15 15" stroke="#f08020" stroke-width="2.600"/>
        <path d="M533.500 278l-4-15h8z" fill="#f5a040" stroke="#f08020" stroke-width="1.500"/>
        <path d="M511 252l3.500-8.500 4 4z" fill="#f5a040" stroke="#f08020" stroke-width="1.500"/>
        <path d="M502 246l4-8 2 7 5-6M505 243h8" stroke="#d9d030" fill="none"/>
        <path d="M558 223l4 7 4-7" stroke="#d9d030" fill="none"/>
        <text x="503" y="231" class="green">LIM2</text>
        <path d="M537 218l3.500 9 3.500-9" fill="none" stroke="#08200c" stroke-width="3"/>
        <path d="M537 218l3.500 9 3.500-9" fill="none" stroke="#1c6a30" stroke-width="1"/>
        <text x="532.500" y="570" class="green">LIM1</text>

        <g fill="none" stroke="#22b43c" stroke-width="1.200">
          <path d="M698.500 260v156M698.500 432v168"/>
          <circle cx="699" cy="256.500" r="2.500"/>
          <path d="M690 261l15 2M695 278l3.500-15 4 14M694 584l4.500 16 3.500-15M690 599l15 2.500"/>
        </g>
        <text x="691" y="432" class="green">20</text>
        <circle cx="691" cy="252.500" r="4" fill="none" stroke="#07180a" stroke-width="3"/>
        <circle cx="691" cy="252.500" r="4" fill="none" stroke="#1f7a35" stroke-width=".8"/>
        <circle cx="691" cy="252.500" r="1.300" fill="#1f7a35"/>

        <path d="M1211.500 578v18l19 4M1211.500 596l-5 4" fill="none" stroke="#f2f2fa"/>
        <text x="1210" y="577" class="triad">z</text>
        <text x="1229" y="602" class="triad">y</text>
        <text x="1201" y="606" class="triad">x</text>
      </svg>
      <div class="tree">
        <div class="row"><ui-icon name="root" class="root"></ui-icon><span>Set Screw 2</span></div>
        <div class="branch">
          ${['xy plane', 'yz plane', 'zx plane'].map(t => html`
            <div class="row"><i class="tick"></i><ui-icon name="treeplane" class="pl"></ui-icon><span>${t}</span></div>`)}
          <div class="row last">
            <ui-icon name="plus" class="plus"></ui-icon><i class="stub"></i>
            <ui-icon name="body" class="part"></ui-icon><span class="active">PartBody</span>
          </div>
        </div>
      </div>
    `
  }

  static styles = css`
    :host {
      display: block;
      position: relative;
      width: 1245px;
      height: 584px;
      overflow: hidden;
      background: linear-gradient(#333162, #3c3969 35%, #464374 66%, #6a688f 80%, #a5a3bc);
      font-family: "Noto Sans", "Open Sans", sans-serif;
    }
    svg {
      display: block;
    }
    .green {
      font-size: 12.500px;
      fill: #27c23f;
    }
    .yellow {
      font-size: 13px;
      fill: #d8cc3a;
    }
    .triad {
      font-size: 13px;
      fill: #f2f2fa;
    }
    /* the specification tree floats over the geometry */
    .tree {
      position: absolute;
      left: 0;
      top: 54px;
      font-size: 18.500px;
      letter-spacing: -0.6px;
      color: #fff;
    }
    .row {
      display: flex;
      align-items: center;
      height: 37px;
      white-space: nowrap;
    }
    .root {
      width: 31px;
      height: 31px;
      margin: 0 5px 6px 2px;
    }
    .branch {
      background: linear-gradient(#fff, #fff) 11px 0 / 2px 126px no-repeat;
    }
    .tick {
      width: 16px;
      height: 2px;
      margin: 0 2px 0 12px;
      background: #fff;
    }
    .pl {
      width: 28px;
      height: 22px;
      margin-right: 6px;
    }
    .last {
      height: 34px;
    }
    .plus {
      width: 16px;
      height: 16px;
      margin-left: 4px;
    }
    .stub {
      width: 8px;
      height: 2px;
      background: #fff;
    }
    .part {
      width: 28px;
      height: 28px;
      margin-right: 8px;
    }
    .active {
      height: 27px;
      line-height: 27px;
      width: 76px;
      background: #f88008;
    }
  `
}

@customElement('pocket-dialog')
export class PocketDialog extends LitElement {
  render() {
    return html`
      <div class="title"><span>Pocket Definition</span><span class="ask">?</span>
        <svg width="11" height="11" viewBox="0 0 11 11"><path d="M.5.5l10 10M10.500.5l-10 10" stroke="#333" stroke-width="1.100"/></svg>
      </div>
      <div class="content">
        <fieldset class="limit">
          <legend>First Limit</legend>
          <div class="line"><label>Type:</label><div class="select"><span>Dimension</span>
            <svg width="8" height="6" viewBox="0 0 8 6"><path d="M0 1l4 4 4-4" fill="none" stroke="#555"/></svg></div></div>
          <div class="line depth"><label>Depth:</label><div class="input deep">20mm</div>
            <div class="spin"><i class="up"></i><i class="down"></i></div></div>
          <div class="line off"><label>Limit:</label><div class="input">No selection</div></div>
        </fieldset>
        <fieldset class="profile">
          <legend>Profile/Surface</legend>
          <div class="line"><label class="sel">Selection:</label><div class="input wide">Sketch.2</div>
            <div class="pick"><ui-icon name="sketch"></ui-icon></div></div>
          <div class="check"><i></i>Thick</div>
          <div class="button side">Reverse Side</div>
        </fieldset>
        <div class="check mirror"><i></i><span class="focus">Mirrored extent</span></div>
        <div class="button dir">Reverse Direction</div>
        <div class="button more">More&gt;&gt;</div>
        <div class="actions">
          <div class="button first"><b class="ball ok"></b>OK</div>
          <div class="button"><b class="ball no"></b>Cancel</div>
          <div class="button last">Preview</div>
        </div>
      </div>
    `
  }

  static styles = css`
    :host {
      display: flex;
      flex-direction: column;
      box-sizing: border-box;
      width: 230px;
      height: 326px;
      border: 1px solid #8f95ac;
      background: #f9e4c1;
      box-shadow: 1px 2px 6px rgba(0, 0, 0, 0.5);
      font: 11.300px "Open Sans", "Noto Sans", sans-serif;
      letter-spacing: -0.42px;
      color: #1c1c1c;
      white-space: nowrap;
    }
    .title {
      display: flex;
      align-items: center;
      height: 22px;
      padding: 0 16px 0 2px;
      background: #fff;
      font-size: 11.500px;
      letter-spacing: -0.35px;
    }
    .title span {
      margin-bottom: 2px;
    }
    .title .ask {
      margin: 0 34px 2px auto;
      font-size: 13px;
      font-weight: 600;
    }
    .content {
      flex: 1;
      display: flex;
      flex-direction: column;
      padding: 9px 6px 0 9px;
      background: radial-gradient(ellipse 34px 11px at 16px 100%, #16384f 10%, #6d8fa5 60%, transparent);
    }
    fieldset {
      width: 195px;
      margin: 0;
      padding: 0 0 0 1px;
      border: 1px solid #a9a79f;
      box-sizing: border-box;
      min-width: 0;
    }
    legend {
      height: 16px;
      line-height: 16px;
      margin-left: 6px;
      padding: 0 3px;
    }
    .limit {
      height: 91px;
    }
    .profile {
      height: 85px;
      margin-top: 0;
    }
    .line {
      display: flex;
      align-items: center;
    }
    label {
      width: 60px;
      flex: none;
    }
    .limit label {
      padding-top: 2px;
    }
    .select {
      display: flex;
      align-items: center;
      justify-content: space-between;
      width: 132px;
      height: 21px;
      padding: 0 4px 0 3px;
      margin-top: 2px;
      margin-left: -1px;
      border: 1px solid #acacac;
      background: #e0e0e0;
      box-sizing: border-box;
    }
    .input {
      width: 111px;
      height: 19px;
      line-height: 17px;
      padding-left: 4px;
      box-sizing: border-box;
      border: 1px solid #8a8a88;
      background: #fff;
    }
    .depth {
      margin-top: 1px;
    }
    .deep {
      height: 20px;
      border-width: 2px 0 0 2px;
      width: 109px;
      padding-left: 3px;
    }
    .spin {
      display: grid;
      gap: 1px;
      width: 15px;
      border: 1px solid #555;
      background: #888;
    }
    .spin i {
      display: flex;
      height: 8px;
      align-items: center;
      justify-content: center;
      background: #dcdcd4;
    }
    .spin i::after {
      content: "";
      border: 4px solid transparent;
      border-bottom: 4px solid #000;
      border-top: 0;
    }
    .spin .down::after {
      border-bottom: 0;
      border-top: 4px solid #000;
    }
    .off {
      margin-top: 8px;
      color: #8b8a86;
    }
    .sel {
      width: 50px;
      margin-left: 2px;
    }
    .wide {
      width: 117px;
      padding-left: 3px;
    }
    .profile .line {
      margin-top: 3px;
    }
    .pick {
      padding: 1px 1px;
      height: 17px;
      border: 1px solid #fff;
      border-color: #fff #777 #777 #fff;
      background: #e9e5d8;
    }
    .pick ui-icon {
      width: 17px;
      height: 17px;
    }
    .check {
      display: flex;
      align-items: center;
      gap: 5px;
      height: 25px;
    }
    .check i {
      width: 9px;
      height: 10px;
      border: 1px solid #66665c;
      background: #fffde6;
    }
    .button {
      display: flex;
      align-items: center;
      justify-content: center;
      height: 20px;
      box-sizing: border-box;
      border: 2px solid;
      border-color: #e2e0f4 #908dac #8784a2 #dcdaf2;
      background: #c9c7e4;
    }
    .side {
      width: 98px;
      padding-right: 16px;
    }
    .mirror {
      margin: 0 0 0 2px;
      gap: 1px;
    }
    .focus {
      padding: 0 2px;
      height: 16px;
      line-height: 16px;
      border: 1px dotted #333;
    }
    .dir {
      width: 105px;
      margin: 0 0 0 2px;
    }
    .more {
      width: 56px;
      margin: 17px 0 0 140px;
    }
    .actions {
      display: flex;
      gap: 6px;
      margin: 7px 0 0 -1px;
    }
    .actions .button {
      width: 67px;
      padding-right: 2px;
    }
    .actions .first {
      padding-right: 16px;
    }
    .ball {
      width: 11px;
      height: 11px;
      margin-right: 5px;
      border-radius: 50%;
    }
    .ok {
      margin-right: 14px;
      background: radial-gradient(circle at 35% 30%, #a8f09a, #1e9a24 45%, #0b4a10);
    }
    .no {
      background: radial-gradient(circle at 35% 30%, #ffc0b0, #d8392c 45%, #6c120c);
    }
  `
}

@customElement('app-root')
export class AppRoot extends LitElement {
  render() {
    return html`
      <div class="title">
        <ui-icon name="logo"></ui-icon><span>CATIA V5 - [Set Screw 2]</span>
        <svg class="sys" width="110" height="14" viewBox="0 0 110 14" fill="none" stroke="#8a8a8e">
          <path d="M6 8.500h10M48.500 4.500h7v7h-7zM50.500 4.500v-2h7v7h-2M91.500 2l9 9M100.500 2l-9 9"/>
        </svg>
      </div>
      <div class="menu">
        <ui-icon name="logo"></ui-icon>
        <span class="start"><u>S</u>tart</span>
        <div class="items">
          <span>ENOVIA V5 VPM</span><span><u>F</u>ile</span><span><u>E</u>dit</span><span><u>V</u>iew</span>
          <span><u>I</u>nsert</span><span><u>T</u>ools</span><span><u>W</u>indow</span><span><u>H</u>elp</span>
        </div>
        <svg class="mdi" width="53" height="18" viewBox="0 0 53 18">
          <path d="M0 0h53v18H0z" fill="#e6e6ea"/><path d="M17.500 0v18M35 0v18" stroke="#fafafa"/>
          <path d="M5 12h5" stroke="#777" stroke-width="1.500"/><path d="M23 8h5v4h-5zM25 8V6h5v4h-2M42 6l5 6M47 6l-5 6" fill="none" stroke="#777" stroke-width="1.400"/>
        </svg>
      </div>
      <div class="main">
        <model-view></model-view>
        <div class="side">
          ${sideGroups.map(g => html`<div class="sgroup"><i class="hsep" style="margin-bottom:${g.lead}px"></i>${g.tools.map(tool)}</div>`)}
        </div>
        <float-bar class="sketchbar" label="Sketch-Based Features" .groups=${[[['pad', 'v'], ['pocket', 'v'], ['shaft'], ['groove'], ['hole'], ['rib'], ['slot'], ['solid', 'v'], ['multi'], ['removed']]]}></float-bar>
        <float-bar class="dressbar" label="Dress-Up Features" .groups=${[[['fillet'], ['draft', 'v'], ['shell'], ['thickness'], ['thread'], ['remove', 'v']]]}></float-bar>
        <float-bar class="transbar" label="Transformation Feat..." .groups=${[[['translate', 'v']], [['mirror'], ['pattern', 'v']], [['scale', 'v']]]}></float-bar>
        <float-bar class="refbar" label="Reference E..." .groups=${[[['point'], ['line'], ['plane']]]}></float-bar>
        <float-bar class="sbar narrow" label="S" .groups=${[[['sketch', 'v']]]}></float-bar>
        <pocket-dialog></pocket-dialog>
        <svg class="pointer" width="12" height="18" viewBox="0 0 12 18"><path d="M1 1v13l3-3 2.500 6 2-1L6 10.500h4.500z" fill="#fff" stroke="#222"/></svg>
      </div>
      <div class="bar">
        ${bottomGroups.map(g => html`<div class="bgroup"><i class="vsep"></i>${g.map(tool)}</div>`)}
        <span class="more">»</span>
        <div class="brand">
          <svg width="44" height="24" viewBox="0 0 44 24" fill="none">
            <path d="M14 3q9-2 9 1t-6 4q5 0 2 4" stroke="#e0402c" stroke-width="1.800"/>
            <path d="M9 11q8-1 5 4-3 6-10 6l5-8" stroke="#35357e" stroke-width="1.800"/>
            <path d="M30 10q-8-1-8 2t4 3 1 4-8 1" stroke="#f09020" stroke-width="2"/>
          </svg>
          <b>CATIA</b>
        </div>
      </div>
      <div class="status">
        <span>Enter new data to modify the pocket.</span>
        <i class="power"></i>
        <div class="sbtn"><svg width="16" height="14" viewBox="0 0 16 14"><path d="M0 0h15v13H0z" fill="#c8c8c4" stroke="#333"/><path d="M3 3h5v5H3zM9 9h4" fill="none" stroke="#111" stroke-width="1.500"/></svg></div>
        <div class="sbtn"><svg width="16" height="14" viewBox="0 0 16 14"><path d="M1 12h14M3 11V2h9l2 3v6M6 8l3-3 2 3" fill="none" stroke="#a4a4b4"/><circle cx="8" cy="7" r="3" fill="none" stroke="#fff"/></svg></div>
      </div>
      <div class="taskbar">
        <div class="win"><ui-icon name="windows"></ui-icon></div>
        <div class="search">Search the web and Windows</div>
        <div class="view"><ui-icon name="taskview"></ui-icon><i></i><i></i></div>
        ${['explorer', 'store', 'redgear', 'edge', 'file', 'firefox', 'chrome', 'ps', 'catia', 'recorder'].map(n => html`
          <div class="app ${n}"><ui-icon name=${n}></ui-icon></div>`)}
        <div class="tray">
          <ui-icon name="help" class="help"></ui-icon>
          ${['chevron', 'airplane', 'speaker', 'battery', 'note'].map(n => html`<ui-icon name=${n}></ui-icon>`)}
          <span class="lang">ENG</span>
          <div class="clock"><span>15:12</span><span>02-10-2016</span></div>
        </div>
      </div>
      <i class="edge-h top"></i><i class="edge-h bottom"></i><i class="edge-v left"></i><i class="edge-v right"></i>
    `
  }

  static styles = [toolStyles, css`
    :host {
      position: relative;
      display: flex;
      flex-direction: column;
      width: 1280px;
      height: 720px;
      overflow: hidden;
      background: #c9c9e0;
      font: 11.500px "Open Sans", "Noto Sans", sans-serif;
      letter-spacing: -0.3px;
      color: #16161c;
      white-space: nowrap;
    }
    .title {
      display: flex;
      align-items: center;
      height: 22px;
      padding: 0 10px 0 3px;
      box-sizing: border-box;
      background: #fdfdfd;
      color: #a0a0a4;
    }
    .title ui-icon {
      width: 13px;
      height: 13px;
      margin-right: 6px;
    }
    .title span {
      margin-bottom: 1px;
    }
    .sys {
      margin: 0 0 1px auto;
    }
    .menu {
      display: flex;
      align-items: center;
      height: 19px;
      box-sizing: border-box;
      border-bottom: 1px solid #85859a;
      background: #cdcce6;
    }
    .menu ui-icon {
      width: 18px;
      height: 15px;
      margin-right: 2px;
    }
    .start {
      width: 38px;
      padding-left: 6px;
      line-height: 18px;
      background: #fde3b8;
    }
    .items {
      display: grid;
      grid-template-columns: 94px 39px 41px 47px 49px 49px 65px auto;
      margin-left: 7px;
      line-height: 18px;
    }
    u {
      text-underline-offset: 2px;
    }
    .mdi {
      margin-left: auto;
    }
    .main {
      position: relative;
      display: flex;
      height: 584px;
    }
    .side {
      flex: 1;
      box-sizing: border-box;
      padding: 5px 0 0 4px;
      display: grid;
      grid-template-rows: 44px 121px 45px 43px 69px 98px 1fr;
      background: linear-gradient(90deg, #fff, #e2e2f0 12%, #cbcbe2 30%, #c6c6de 80%, #8e8ea2 96%);
    }
    .sgroup {
      display: flex;
      flex-direction: column;
      --tool-width: 28px;
      --tool-height: 26px;
    }
    .hsep {
      flex: none;
      width: 15px;
      height: 1px;
      border-bottom: 1px solid #fff;
      background: #9a9aac;
    }
    float-bar,
    pocket-dialog,
    .pointer {
      position: absolute;
    }
    .sketchbar {
      left: 915px;
      top: 29px;
      width: 282px;
      --grip-gap: 8px;
      --tool-width: 26.700px;
    }
    .dressbar {
      left: 991px;
      top: 101px;
      width: 203px;
      --grip-gap: 38px;
      --drop: -1px;
      --tool-width: 26.300px;
    }
    .transbar {
      left: 1056px;
      top: 173px;
      width: 140px;
      --drop: -1px;
    }
    .refbar {
      left: 1041px;
      top: 259px;
      width: 93px;
      --grip-gap: 6px;
    }
    .sbar {
      left: 1156px;
      top: 252px;
      width: 34px;
    }
    pocket-dialog {
      left: 811px;
      top: 100px;
    }
    .pointer {
      left: 879px;
      top: 316px;
    }
    .bar {
      display: grid;
      grid-template-columns: 284px 198px 337px 43px 97px 44px 209px 18px auto;
      height: 35px;
      padding-left: 4px;
      box-sizing: border-box;
      border-bottom: 1px solid #77778a;
      background: linear-gradient(#fdfdff, #e0e0f0 25%, #cacae2 45%, #c3c3d8 75%, #a8a8bb);
    }
    .bgroup {
      display: flex;
      align-items: center;
      padding-top: 4px;
      --tool-width: 26.300px;
    }
    .bgroup:nth-child(2) {
      --tool-width: 25.700px;
    }
    .vsep {
      width: 1px;
      height: 15px;
      margin: 0 6px 12px 1px;
      border-left: 1px solid #fff;
      background: #9a9aac;
    }
    .more {
      font-size: 15px;
      color: #fff;
      padding-top: 3px;
    }
    .brand {
      position: relative;
    }
    .brand b {
      position: absolute;
      left: 7px;
      bottom: 0;
      font: italic bold 10px "Liberation Sans", sans-serif;
      letter-spacing: 0;
      color: #35357e;
    }
    .status {
      display: flex;
      align-items: center;
      height: 23px;
      padding-left: 3px;
      box-sizing: border-box;
      background: #cac9e2;
      letter-spacing: -0.36px;
    }
    .power {
      width: 281px;
      height: 17px;
      margin-left: auto;
      box-sizing: border-box;
      border: 1px solid #77778a;
      background: #fdfdfd;
    }
    .sbtn {
      display: flex;
      align-items: center;
      justify-content: center;
      width: 31px;
      height: 20px;
      border-right: 1px solid #8c8ca0;
    }
    .taskbar {
      display: flex;
      height: 37px;
      background: #111112;
    }
    .win {
      display: flex;
      align-items: center;
      justify-content: center;
      width: 45px;
    }
    .win ui-icon {
      width: 17px;
      height: 17px;
    }
    .search {
      width: 322px;
      padding-left: 12px;
      box-sizing: border-box;
      line-height: 37px;
      font-size: 14.500px;
      letter-spacing: -0.6px;
      color: #a3a3a3;
      background: #3b3b3b;
    }
    .view {
      display: flex;
      align-items: center;
      gap: 2px;
      width: 65px;
      padding-left: 13px;
      box-sizing: border-box;
    }
    .view i {
      width: 1px;
      height: 14px;
      background: #4a4a4a;
    }
    .view ui-icon {
      margin-right: 5px;
    }
    .app {
      display: flex;
      align-items: center;
      justify-content: center;
      width: 45.900px;
      box-sizing: border-box;
    }
    .app ui-icon {
      width: 22px;
      height: 22px;
    }
    .catia {
      background: #323234;
    }
    .explorer,
    .catia,
    .recorder {
      background-image: linear-gradient(#9fc4f0, #9fc4f0);
      background-repeat: no-repeat;
      background-position: 50% 100%;
      background-size: 37px 3px;
    }
    .catia {
      background-size: 45px 3px;
    }
    .tray {
      display: flex;
      align-items: center;
      gap: 2.700px;
      margin-left: auto;
      color: #eee;
    }
    .help {
      width: 21px;
      height: 21px;
      margin-right: 4px;
    }
    .lang {
      width: 26px;
      margin-left: 3px;
    }
    .clock {
      display: flex;
      flex-direction: column;
      align-items: center;
      width: 72px;
      margin-right: 4px;
      margin-bottom: 1px;
      line-height: 16px;
      border-right: 1px solid #444;
    }
    /* dashed marker along the recorded area */
    .edge-h {
      position: absolute;
      left: 0;
      right: 0;
      height: 2px;
      background: repeating-linear-gradient(90deg, #1c149c 0 10px, transparent 10px 18.700px);
    }
    .edge-v {
      position: absolute;
      top: 0;
      bottom: 0;
      width: 2px;
      background: repeating-linear-gradient(#1c149c 0 9px, #b8b8bc66 9px 18.700px);
    }
    .top {
      top: 0;
    }
    .bottom {
      bottom: 0;
    }
    .left {
      left: 0;
      width: 1px;
    }
    .right {
      right: 0;
    }
  `]
}
